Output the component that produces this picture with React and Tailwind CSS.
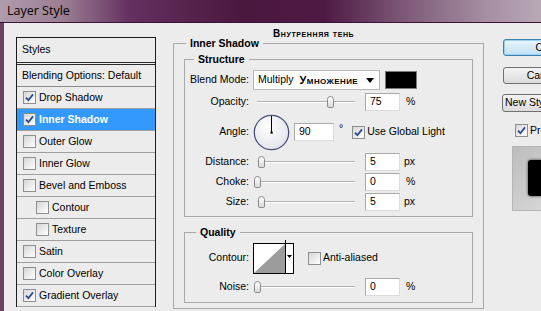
import React from 'react';

const Check = ({ checked }) => (
  <span className="w-[13px] h-[13px] border border-[#8e8f8f] bg-[linear-gradient(135deg,#d6d6d6,#ffffff)] flex items-center justify-center shrink-0">
    {checked && (
      <svg width="9" height="9" viewBox="0 0 9 9">
        <path d="M1 4.6 L3.4 7.2 L8 1.4" stroke="#2b4a8e" strokeWidth="1.8" fill="none" />
      </svg>
    )}
  </span>
);

const Slider = ({ thumb }) => (
  <div className="relative w-[98px] h-[20px] ml-[4px] shrink-0">
    <div className="absolute left-0 right-0 top-[9px] h-[2px] border-t border-[#b0b0b0] border-b border-b-white" />
    <div className={`absolute top-[4px] w-[7px] h-[12px] rounded-t-[4px] rounded-b-[2px] border border-[#8a8a8a] bg-[linear-gradient(#ffffff,#d9d9d9)] ${thumb}`} />
  </div>
);

const Field = ({ value, className = 'w-[35px] ml-[10px]' }) => (
  <div className={`h-[18px] bg-white border border-[#a9a9a9] border-r-[#dcdcdc] border-b-[#dcdcdc] pl-[4px] flex items-center shrink-0 ${className}`}>
    {value}
  </div>
);

const Row = ({ label, children, h = 'h-[20px]', labelW = 'w-[56px]' }) => (
  <div className={`flex items-center ${h}`}>
    <span className={`${labelW} flex justify-end whitespace-nowrap shrink-0`}>{label}</span>
    <div className="flex items-center ml-[4px]">{children}</div>
  </div>
);

const styles = [
  { name: 'Drop Shadow', checked: true },
  { name: 'Inner Shadow', checked: true, active: true },
  { name: 'Outer Glow' },
  { name: 'Inner Glow' },
  { name: 'Bevel and Emboss' },
  { name: 'Contour', sub: true },
  { name: 'Texture', sub: true },
  { name: 'Satin' },
  { name: 'Color Overlay' },
  { name: 'Gradient Overlay', checked: true },
];

export default function App() {
  return (
    <div className="w-[541px] h-[311px] overflow-hidden bg-[#ececec] font-['Liberation_Sans',Arial,sans-serif] text-[10.5px] text-black flex flex-col">
      {/* Title bar */}
      <div className="h-[23px] shrink-0 flex items-center pl-[7px] bg-[linear-gradient(90deg,#b09cab_0%,#9a7c92_12%,#643060_24%,#4a173f_45%,#4e1a45_60%,#7e5a78_75%,#a58fa2_90%,#b9a8b6_100%)] border-b border-[#3b1233] text-[12.5px] font-['Open_Sans','Liberation_Sans',sans-serif]">
        Layer Style
      </div>

      {/* Body */}
      <div className="flex flex-1 border-l-[4px] border-l-[#6c4164]">
        {/* Styles list */}
        <div className="w-[169px] shrink-0 pl-[12px] pt-[14px]">
          <div className="w-[140px] border border-[#1c1c1c] border-b-0">
            <div className="h-[27px] flex items-center pl-[5px] border-b-[3px] border-double border-[#2a2a2a]">Styles</div>
            <div className="h-[22px] flex items-center pl-[5px] border-b border-[#8c8c8c]">Blending Options: Default</div>
            {styles.map((s) => (
              <div
                key={s.name}
                className={`h-[22px] flex items-center gap-[3px] border-b border-[#a0a0a0] ${s.sub ? 'pl-[19px]' : 'pl-[6px]'} ${s.active ? 'bg-[#3399ff] text-white font-bold' : ''}`}
              >
                <Check checked={s.checked} />
                <span>{s.name}</span>
              </div>
            ))}
          </div>
        </div>

        {/* Settings */}
        <div className="w-[311px] shrink-0 flex flex-col">
          <div className="h-[14px] pl-[100px] pt-[6px] text-[10px] leading-[10px] font-bold [font-variant:small-caps] tracking-[0.6px]">
            Внутренняя тень
          </div>
          <fieldset className="h-[272px] border border-[#a9a9a9] px-[10px]">
            <legend className="ml-[2px] px-[4px] font-bold leading-[13px]">Inner Shadow</legend>

            <fieldset className="mt-[3px] border border-[#a9a9a9] px-[8px] pt-[4px] pb-[4px]">
              <legend className="ml-[1px] px-[4px] font-bold leading-[13px]">Structure</legend>
              <Row label="Blend Mode:">
                <div className="w-[127px] h-[20px] bg-white border border-[#b5b5b5] flex items-center pl-[4px] pr-[5px]">
                  <span>Multiply</span>
                  <span className="ml-[6px] font-bold text-[11px] [font-variant:small-caps] tracking-[0.4px]">Умножение</span>
                  <svg className="ml-auto" width="8" height="5" viewBox="0 0 8 5">
                    <path d="M0 0 H8 L4 5 Z" fill="#000" />
                  </svg>
                </div>
                <div className="ml-[5px] w-[32px] h-[18px] bg-black border border-[#7a7a7a]" />
              </Row>
              <Row label="Opacity:" h="h-[21px] mt-[1px]">
                <Slider thumb="left-[70px]" />
                <Field value="75" />
                <span className="ml-[6px]">%</span>
              </Row>
              <Row label="Angle:" h="h-[40px]">
                <svg width="37" height="37" viewBox="0 0 37 37">
                  <defs>
                    <radialGradient id="dial" cx="40%" cy="35%" r="70%">
                      <stop offset="0" stopColor="#ffffff" />
                      <stop offset="1" stopColor="#e2e3ea" />
                    </radialGradient>
                  </defs>
                  <circle cx="18.5" cy="18.5" r="17.2" fill="url(#dial)" stroke="#48507a" strokeWidth="1.3" />
                  <line x1="18.5" y1="18.5" x2="18.5" y2="2" stroke="#000" strokeWidth="1" />
                  <rect x="17.5" y="17.5" width="2.2" height="2.2" fill="#000" />
                </svg>
                <Field value="90" className="w-[40px] ml-[4px]" />
                <span className="ml-[5px] -mt-[6px]">°</span>
                <span className="ml-[9px]">
                  <Check checked />
                </span>
                <span className="ml-[2px] whitespace-nowrap">Use Global Light</span>
              </Row>
              <Row label="Distance:">
                <Slider thumb="left-[1px]" />
                <Field value="5" />
                <span className="ml-[4px]">px</span>
              </Row>
              <Row label="Choke:">
                <Slider thumb="-left-[3px]" />
                <Field value="0" />
                <span className="ml-[6px]">%</span>
              </Row>
              <Row label="Size:">
                <Slider thumb="left-[1px]" />
                <Field value="5" />
                <span className="ml-[4px]">px</span>
              </Row>
            </fieldset>

            <fieldset className="mt-[9px] border border-[#a9a9a9] px-[8px] pt-[3px] pb-[4px]">
              <legend className="ml-[3px] px-[4px] font-bold leading-[13px]">Quality</legend>
              <Row label="Contour:" h="h-[32px]" labelW="w-[56px]">
                <div className="w-[41px] h-[31px] bg-white border border-black flex">
                  <svg width="31" height="29" viewBox="0 0 31 29" className="shrink-0">
                    <path d="M0 29 L31 0 L31 29 Z" fill="#9c9c9c" />
                  </svg>
                  <div className="flex-1 border-l border-black flex items-center justify-center -mt-[4px]">
                    <svg width="5" height="3" viewBox="0 0 5 3">
                      <path d="M0 0 H5 L2.5 3 Z" fill="#000" />
                    </svg>
                  </div>
                </div>
                <span className="ml-[14px]">
                  <Check />
                </span>
                <span className="ml-[2px]">Anti-aliased</span>
              </Row>
              <Row label="Noise:" h="h-[22px] mt-[2px]">
                <Slider thumb="-left-[3px]" />
                <Field value="0" />
                <span className="ml-[6px]">%</span>
              </Row>
            </fieldset>
          </fieldset>
        </div>

        {/* Buttons */}
        <div className="flex-1 pl-[19px] pt-[16px] flex flex-col items-start">
          <div className="w-[80px] h-[17px] shrink-0 rounded-[3px] border border-[#3c7fb1] bg-[linear-gradient(#eaf6fd,#bfe1f4)] shadow-[inset_0_0_0_1px_#9ad1f0] flex items-center justify-center">
            OK
          </div>
          <div className="mt-[11px] w-[80px] h-[17px] shrink-0 rounded-[3px] border border-[#707070] bg-[linear-gradient(#f3f3f3,#dcdcdc)] flex items-center justify-center">
            Cancel
          </div>
          <div className="mt-[10px] -ml-[1px] w-[80px] h-[18px] shrink-0 rounded-[3px] border border-[#707070] bg-[linear-gradient(#f3f3f3,#dcdcdc)] flex items-center pl-[2px] whitespace-nowrap">
            New Style...
          </div>
          <div className="mt-[11px] ml-[12px] flex items-center gap-[2px]">
            <Check checked />
            <span>Preview</span>
          </div>
          <div className="mt-[7px] ml-[9px] w-[70px] h-[65px] shrink-0 border border-[#b5b5b5] bg-[linear-gradient(135deg,#bdbdbd,#e0e0e0)] pl-[15px] pt-[13px]">
            <div className="w-[40px] h-[36px] rounded-[3px] bg-black shadow-[0_0_3px_#333]" />
          </div>
        </div>
      </div>
    </div>
  );
}
